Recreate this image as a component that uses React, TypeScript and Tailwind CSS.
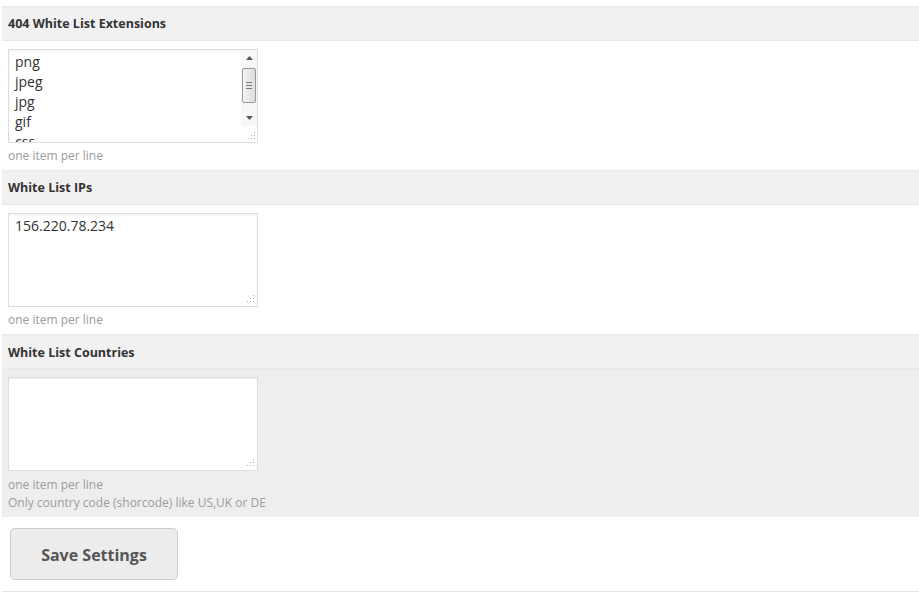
import React from "react";

const font = { fontFamily: '"Open Sans", "Liberation Sans", sans-serif' };

const Grip = () => (
  <svg width="8" height="8" viewBox="0 0 8 8" className="block">
    <g fill="#b0b0b0">
      <rect x="6" y="0" width="1" height="1" />
      <rect x="3" y="3" width="1" height="1" />
      <rect x="6" y="3" width="1" height="1" />
      <rect x="0" y="6" width="1" height="1" />
      <rect x="3" y="6" width="1" height="1" />
      <rect x="6" y="6" width="1" height="1" />
    </g>
  </svg>
);

const Scrollbar = () => (
  <div className="w-[16px] flex flex-col bg-[#f7f7f7]">
    <div className="h-[16px] flex items-center justify-center">
      <svg width="7" height="4" viewBox="0 0 7 4">
        <path d="M0 4 L3.5 0 L7 4 Z" fill="#555" />
      </svg>
    </div>
    <div className="flex-1 flex flex-col px-[1px]">
      <div className="mt-[2px] h-[35px] rounded-[2px] border border-[#9a9a9a] bg-gradient-to-r from-[#f4f4f4] to-[#dcdcdc] flex flex-col items-center justify-center gap-[2px]">
        <div className="w-[6px] h-px bg-[#777]" />
        <div className="w-[6px] h-px bg-[#777]" />
        <div className="w-[6px] h-px bg-[#777]" />
      </div>
    </div>
    <div className="h-[16px] flex items-center justify-center">
      <svg width="7" height="4" viewBox="0 0 7 4">
        <path d="M0 0 L7 0 L3.5 4 Z" fill="#555" />
      </svg>
    </div>
    <div className="h-[16px] flex items-end justify-end pr-[1px] pb-[2px] bg-white">
      <Grip />
    </div>
  </div>
);

interface FieldProps {
  title: string;
  value: string;
  help: string[];
  shaded?: boolean;
  scroll?: boolean;
}

const Field: React.FC<FieldProps> = ({ title, value, help, shaded, scroll }) => {
  return (
    <div className={shaded ? "bg-[#eeeeee]" : "bg-white"}>
      <div className="h-[35px] flex items-center px-[6px] bg-[#f1f1f1] border-y border-[#e8e8e8]">
        <span className={`text-[12.5px] font-bold text-[#333] ${shaded ? "pt-[4px]" : "pt-[2px]"}`}>{title}</span>
      </div>
      <div className="pt-[8px] pb-[5px] px-[6px]">
        <div className="w-[250px] h-[94px] flex border border-[#dddddd] bg-white shadow-[inset_0_1px_2px_rgba(0,0,0,0.07)]">
          <textarea
            defaultValue={value}
            className="flex-1 min-w-0 resize-none overflow-hidden bg-transparent px-[6px] pt-[2px] text-[14px] leading-[20px] text-[#333] outline-none"
            style={font}
          />
          {scroll ? (
            <Scrollbar />
          ) : (
            <div className="flex items-end pr-[2px] pb-[3px]">
              <Grip />
            </div>
          )}
        </div>
        <div className={shaded ? "mt-[5px]" : "mt-[4px]"}>
          {help.map((h) => (
            <p key={h} className="text-[12px] leading-[18px] text-[#9c9c9c]">
              {h}
            </p>
          ))}
        </div>
      </div>
    </div>
  );
};

export default function App() {
  return (
    <div className="w-full min-h-[606px] bg-white pt-[6px] pl-[2px]" style={font}>
      <Field
        title="404 White List Extensions"
        value={"png\njpeg\njpg\ngif\ncss\njs\nico\nsvg\nwoff"}
        help={["one item per line"]}
        scroll
      />
      <Field title="White List IPs" value="156.220.78.234" help={["one item per line"]} />
      <Field
        title="White List Countries"
        value=""
        help={["one item per line", "Only country code (shorcode) like US,UK or DE"]}
        shaded
      />
      <div className="pt-[11px] pb-[11px] px-[8px] border-b border-[#e5e5e5]">
        <button className="w-[168px] h-[52px] rounded-[5px] border border-[#cccccc] bg-[#ececec] text-[16px] font-bold text-[#555] pt-[2px]">
          Save Settings
        </button>
      </div>
    </div>
  );
}
